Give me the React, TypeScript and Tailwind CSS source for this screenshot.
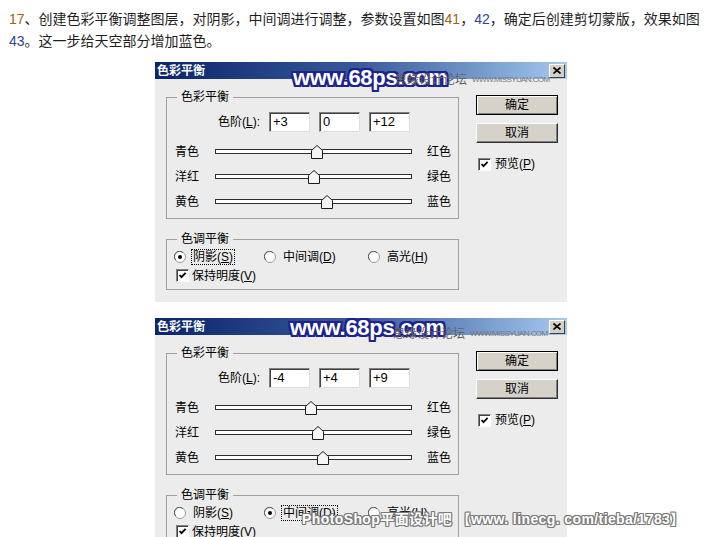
import React from "react";

type SliderRow = { left: string; right: string; pos: number };

type DialogData = {
  levels: string[];
  sliders: SliderRow[];
  tone: number;
  mark: { left: number; top: number };
  site: { left: number; top: number };
};

const dialogs: DialogData[] = [
  {
    levels: ["+3", "0", "+12"],
    sliders: [
      { left: "青色", right: "红色", pos: 101 },
      { left: "洋红", right: "绿色", pos: 98 },
      { left: "黄色", right: "蓝色", pos: 111 },
    ],
    tone: 0,
    mark: { left: 138, top: 5 },
    site: { left: 240, top: 11 },
  },
  {
    levels: ["-4", "+4", "+9"],
    sliders: [
      { left: "青色", right: "红色", pos: 95 },
      { left: "洋红", right: "绿色", pos: 102 },
      { left: "黄色", right: "蓝色", pos: 107 },
    ],
    tone: 1,
    mark: { left: 135, top: -1 },
    site: { left: 238, top: 9 },
  },
];

const tones = [
  { label: "阴影", key: "S", width: "w-[90px]" },
  { label: "中间调", key: "D", width: "w-[104px]" },
  { label: "高光", key: "H", width: "w-[90px]" },
];

const CheckBox: React.FC = () => (
  <span className="w-[13px] h-[13px] shrink-0 bg-white border border-t-[#808080] border-l-[#808080] border-r-white border-b-white shadow-[inset_1px_1px_0_#404040] flex items-center justify-center">
    <svg width="9" height="9" viewBox="0 0 9 9">
      <path d="M1.5 4 L3.5 6.2 L7.6 1.8" stroke="#000" strokeWidth="1.8" fill="none" />
    </svg>
  </span>
);

const Radio: React.FC<{ on: boolean }> = ({ on }) => (
  <svg width="12" height="12" viewBox="0 0 12 12" className="shrink-0">
    <circle cx="6" cy="6" r="5.5" fill="#fff" stroke="#9a9a9a" />
    <path d="M1.8 9 A5 5 0 0 1 9 1.8" stroke="#5a5a5a" fill="none" />
    {on && <circle cx="6" cy="6" r="2" fill="#000" />}
  </svg>
);

const Thumb: React.FC<{ pos: number }> = ({ pos }) => (
  <svg className="absolute top-[-5px]" style={{ left: pos - 6 }} width="12" height="14" viewBox="0 0 12 14">
    <path d="M0.5 5.5 L6 0.5 L11.5 5.5 V13.5 H0.5 Z" fill="#f6f6f6" stroke="#1c1c1c" />
  </svg>
);

const Dialog: React.FC<{ data: DialogData }> = ({ data }) => (
  <div className="relative w-[412px] h-[240px] shrink-0 bg-[#ececec] text-[12px] text-black">
    <div className="flex h-[17px] items-center justify-between bg-linear-to-r from-[#0a246a] via-[#3a5a9a] to-[#a6caf0] pl-[2px] pr-[2px]">
      <span className="font-bold text-white leading-none">色彩平衡</span>
      <span className="w-[16px] h-[14px] bg-[#d4d0c8] border border-t-white border-l-white border-r-[#404040] border-b-[#404040] flex items-center justify-center">
        <svg width="8" height="7" viewBox="0 0 8 7">
          <path d="M0.5 0.5 L7.5 6.5 M7.5 0.5 L0.5 6.5" stroke="#000" strokeWidth="1.6" />
        </svg>
      </span>
    </div>

    <div className="flex pl-[11px] pt-[11px]">
      <div className="w-[293px] flex flex-col">
        <fieldset className="border border-[#a0a0a0] pb-[4px]">
          <legend className="ml-[10px] px-[4px] leading-[14px]">色彩平衡</legend>
          <div className="flex items-center h-[20px] mt-[8px]">
            <span className="w-[93px] text-right">
              色阶(<u>L</u>):
            </span>
            <div className="flex gap-[9px] ml-[9px]">
              {data.levels.map((v, i) => (
                <span
                  key={i}
                  className="w-[41px] h-[20px] bg-white border border-t-[#808080] border-l-[#808080] border-r-[#dedede] border-b-[#dedede] shadow-[inset_1px_1px_0_#404040] pl-[3px] text-[13px] leading-[18px]"
                >
                  {v}
                </span>
              ))}
            </div>
          </div>
          <div className="flex flex-col mt-[7px]">
            {data.sliders.map((s, i) => (
              <div key={i} className="flex items-center h-[25px]">
                <span className="w-[48px] pl-[8px]">{s.left}</span>
                <div className="relative w-[197px] h-[5px] border border-[#2e2e2e] bg-white">
                  <Thumb pos={s.pos} />
                </div>
                <span className="ml-[15px]">{s.right}</span>
              </div>
            ))}
          </div>
        </fieldset>

        <fieldset className="border border-[#a0a0a0] mt-[13px] pb-[4px]">
          <legend className="ml-[10px] px-[4px] leading-[14px]">色调平衡</legend>
          <div className="flex items-center h-[18px] mt-[2px] pl-[7px]">
            {tones.map((t, i) => (
              <div key={i} className={`${t.width} flex items-center`}>
                <Radio on={data.tone === i} />
                <span
                  className={
                    data.tone === i
                      ? "ml-[5px] px-[1px] border border-dotted border-black leading-[14px]"
                      : "ml-[5px] px-[1px] border border-transparent leading-[14px]"
                  }
                >
                  {t.label}(<u>{t.key}</u>)
                </span>
              </div>
            ))}
          </div>
          <div className="flex items-center h-[19px] pl-[9px]">
            <CheckBox />
            <span className="ml-[3px]">
              保持明度(<u>V</u>)
            </span>
          </div>
        </fieldset>
      </div>

      <div className="ml-[17px] w-[82px] flex flex-col pt-[5px]">
        <div className="h-[20px] flex items-center justify-center bg-[#d6d2ca] border border-black shadow-[inset_1px_1px_0_#fff,inset_-1px_-1px_0_#808080]">
          确定
        </div>
        <div className="h-[20px] mt-[8px] flex items-center justify-center bg-[#d6d2ca] border border-t-white border-l-white border-r-[#303030] border-b-[#303030] shadow-[inset_-1px_-1px_0_#808080]">
          取消
        </div>
        <div className="flex items-center h-[14px] mt-[14px] ml-[2px]">
          <CheckBox />
          <span className="ml-[4px]">
            预览(<u>P</u>)
          </span>
        </div>
      </div>
    </div>

    <span
      className="absolute text-[22px] leading-[22px] font-bold text-white tracking-[-0.3px] [text-shadow:2px_0_#1d2290,-2px_0_#1d2290,0_2px_#1d2290,0_-2px_#1d2290,2px_2px_#1d2290,-2px_-2px_#1d2290,2px_-2px_#1d2290,-2px_2px_#1d2290]"
      style={{ left: data.mark.left, top: data.mark.top }}
    >
      www.68ps.com
    </span>
    <span
      className="absolute flex items-center whitespace-nowrap text-[#626262]"
      style={{ left: data.site.left, top: data.site.top }}
    >
      <span className="text-[12px] leading-[14px]">思缘设计论坛</span>
      <span className="ml-[5px] text-[8px] tracking-[-0.6px] leading-[10px] text-[#777]">WWW.MISSYUAN.COM</span>
    </span>
  </div>
);

export default function App() {
  return (
    <div className="relative w-[724px] h-[537px] overflow-hidden bg-white font-['Liberation_Sans','Noto_Sans_CJK_SC',sans-serif]">
      <div className="pt-[8px] pl-[9px] text-[14px] leading-[22px] text-[#1e1e1e] whitespace-nowrap">
        <p>
          <span className="text-[#a0620f]">17</span>、创建色彩平衡调整图层，对阴影，中间调进行调整，参数设置如图
          <span className="text-[#a0620f]">41</span>，<span className="text-[#2c4494]">42</span>
          ，确定后创建剪切蒙版，效果如图
        </p>
        <p>
          <span className="text-[#2c4494]">43</span>。这一步给天空部分增加蓝色。
        </p>
      </div>

      <div className="ml-[155px] mt-[10px] flex flex-col gap-[16px]">
        {dialogs.map((d, i) => (
          <Dialog key={i} data={d} />
        ))}
      </div>

      <span className="absolute left-[302px] top-[511px] whitespace-nowrap text-[14px] leading-[16px] font-bold tracking-[0.4px] text-white [text-shadow:1px_0_#7a7a7a,-1px_0_#7a7a7a,0_1px_#7a7a7a,0_-1px_#7a7a7a,1px_1px_#7a7a7a,-1px_-1px_#7a7a7a,1px_-1px_#7a7a7a,-1px_1px_#7a7a7a]">
        PhotoShop平面设计吧 【www. linecg. com/tieba/1783】
      </span>
    </div>
  );
}
